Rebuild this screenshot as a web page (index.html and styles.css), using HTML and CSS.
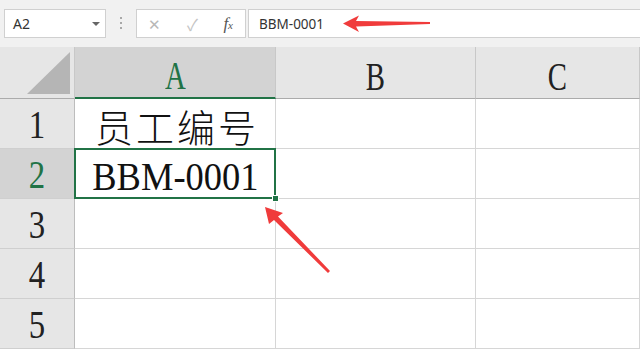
FILE: index.html
```html
<!DOCTYPE html>
<html lang="zh-CN">
    <head>
        <meta charset="UTF-8" />
        <meta name="viewport" content="width=device-width, initial-scale=1.0" />
        <title>员工编号</title>
        <link rel="stylesheet" href="styles.css">
    </head>
    <body>
        <div class="app">
            <div class="formula-bar">
                <div class="name-box">
                    <span>A2</span>
                    <span class="caret"></span>
                </div>
                <div class="grip"><i></i><i></i><i></i></div>
                <div class="fx-buttons">
                    <span class="btn-x">✕</span>
                    <span class="btn-ok">✓</span>
                    <span class="btn-fx">f<small>x</small></span>
                </div>
                <div class="formula-input">BBM-0001</div>
            </div>

            <div class="sheet">
                <div class="corner">
                    <svg width="46" height="44" viewBox="0 0 46 44"><polygon points="44,1 44,43 1,43" fill="#b5b5b5" /></svg>
                </div>
                <div class="col-head active"><span class="ss">A</span></div>
                <div class="col-head"><span class="ss">B</span></div>
                <div class="col-head"><span class="ss">C</span></div>

                <div class="row-head"><span class="ss num">1</span></div>
                <div class="cell cjk">员工编号</div>
                <div class="cell"></div>
                <div class="cell"></div>

                <div class="row-head active"><span class="ss num">2</span></div>
                <div class="cell selected"><span class="ss code">BBM-0001</span><span class="handle"></span></div>
                <div class="cell"></div>
                <div class="cell"></div>

                <div class="row-head"><span class="ss num">3</span></div>
                <div class="cell"></div>
                <div class="cell"></div>
                <div class="cell"></div>

                <div class="row-head"><span class="ss num">4</span></div>
                <div class="cell"></div>
                <div class="cell"></div>
                <div class="cell"></div>

                <div class="row-head"><span class="ss num">5</span></div>
                <div class="cell"></div>
                <div class="cell"></div>
                <div class="cell"></div>
            </div>

            <!-- annotation arrows drawn over the sheet -->
            <svg class="arrows" width="640" height="353" viewBox="0 0 640 353">
                <polygon points="343,23.5 359,15.5 356,21 430,22 430,24 356,26.5 359,32" />
                <polygon points="265,207 283,213 278,216.5 330,271 328,273 274,220 269,224" />
            </svg>
        </div>
    </body>
</html>
```

FILE: styles.css
```css
* {
    box-sizing: border-box;
}

html,
body {
    margin: 0;
    padding: 0;
    background: #fff;
}

body {
    font-family: "Noto Sans", "Open Sans", sans-serif;
    color: #333;
}

.app {
    position: relative;
    width: 640px;
    height: 353px;
    overflow: hidden;
}

/* formula bar */
.formula-bar {
    display: flex;
    align-items: flex-start;
    height: 47px;
    padding: 9px 0 0 4px;
    background: #f1f1f1;
}

.name-box,
.fx-buttons,
.formula-input {
    height: 29px;
    background: #fff;
    border: 1px solid #d0d0d0;
    display: flex;
    align-items: center;
    font-size: 14px;
}

.name-box {
    width: 102px;
    padding: 0 0 0 8px;
    justify-content: space-between;
    color: #333;
}

.caret {
    width: 0;
    height: 0;
    margin-right: 5px;
    border-left: 4px solid transparent;
    border-right: 4px solid transparent;
    border-top: 4px solid #666;
}

.grip {
    width: 30px;
    display: flex;
    flex-direction: column;
    align-items: center;
    gap: 3px;
    padding-top: 8px;
}

.grip i {
    display: block;
    width: 2px;
    height: 2px;
    background: #a8a8a8;
}

.fx-buttons {
    width: 110px;
    justify-content: space-between;
    padding: 0 12px 0 11px;
    color: #b8b8b8;
    font-size: 15px;
}

.btn-ok {
    color: #c4c4c4;
    font-size: 16px;
}

.btn-fx {
    font-family: "Liberation Serif", serif;
    font-style: italic;
    color: #555;
    font-size: 17px;
}

.btn-fx small {
    font-size: 11px;
}

.formula-input {
    flex: 1;
    margin-left: 2px;
    padding-left: 10px;
    border-right: 0;
    font-size: 13.5px;
    color: #333;
}

/* sheet grid */
.sheet {
    display: grid;
    grid-template-columns: 75px 201px 200px 1fr;
    grid-template-rows: 52px repeat(5, 50px);
}

.corner {
    background: #e6e6e6;
    border-right: 1px solid #c8c8c8;
    border-bottom: 1px solid #ababab;
    display: flex;
    align-items: flex-end;
    justify-content: flex-end;
    padding: 0 2px 3px 0;
}

.corner svg {
    display: block;
}

.col-head {
    background: #e6e6e6;
    border-right: 1px solid #c8c8c8;
    border-bottom: 1px solid #ababab;
    display: flex;
    align-items: center;
    justify-content: center;
    padding-top: 8px;
    color: #222;
}

.col-head.active {
    background: #d3d3d3;
    border-bottom: 2px solid #217346;
    color: #217346;
}

.row-head {
    background: #e6e6e6;
    border-right: 1px solid #bdbdbd;
    border-bottom: 1px solid #cfcfcf;
    display: flex;
    align-items: center;
    justify-content: center;
    padding-top: 3px;
    color: #222;
}

.row-head.active {
    background: #d3d3d3;
    color: #217346;
}

.cell {
    position: relative;
    border-right: 1px solid #d6d6d6;
    border-bottom: 1px solid #d6d6d6;
    display: flex;
    align-items: center;
    justify-content: center;
}

/* SimSun-like narrow serif for latin text */
.ss {
    display: inline-block;
    font-family: "Liberation Serif", "Times New Roman", serif;
    font-size: 40px;
    line-height: 1;
    transform: scaleX(0.72);
}

.ss.num {
    transform: scaleX(0.82);
}

.ss.code {
    font-size: 41px;
    color: #111;
    transform: scaleX(0.89);
    margin-top: 6px;
}

.cjk {
    font-family: "Noto Sans CJK SC", sans-serif;
    font-weight: 300;
    font-size: 38px;
    color: #111;
    padding: 4px 0 0 4px;
    letter-spacing: 3px;
}

.cell.selected::after {
    content: "";
    position: absolute;
    top: -1px;
    left: -1px;
    right: -1px;
    bottom: -1px;
    border: 2px solid #217346;
}

.handle {
    position: absolute;
    right: -4px;
    bottom: -4px;
    width: 7px;
    height: 7px;
    background: #217346;
    border: 1px solid #fff;
    z-index: 1;
}

.arrows {
    position: absolute;
    top: 0;
    left: 0;
    pointer-events: none;
}

.arrows polygon {
    fill: #f03b3b;
}
```
